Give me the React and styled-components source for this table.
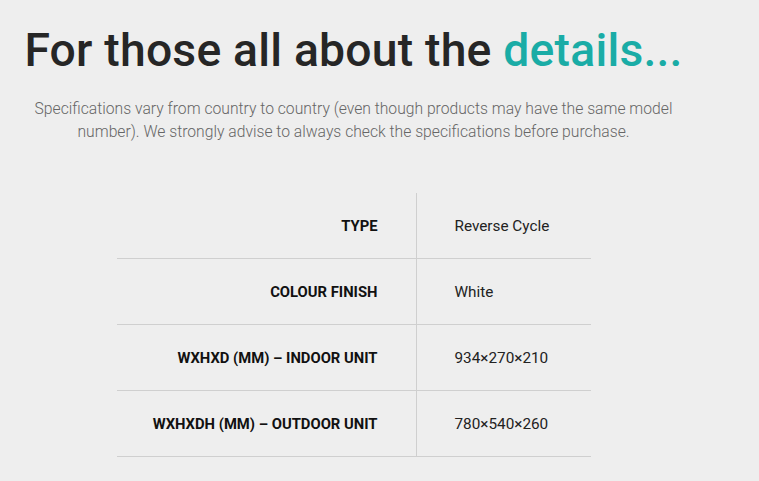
import React from "react";
import styled, { createGlobalStyle } from "styled-components";

const GlobalStyle = createGlobalStyle`
  body {
    margin: 0;
    background: #eeeeee;
    font-family: Roboto, "Noto Sans", sans-serif;
  }
`;

const Page = styled.div`
  width: 707px;
  padding-top: 22px;
  text-align: center;
`;

const Heading = styled.h1`
  margin: 0;
  font-size: 46.3px;
  line-height: 56px;
  font-weight: 500;
  color: #262626;
  letter-spacing: 0.2px;

  span {
    color: #1aaca6;
  }
`;

const Intro = styled.p`
  margin: 19px auto 0;
  width: 680px;
  font-size: 15.7px;
  line-height: 23px;
  font-weight: 300;
  color: #666666;
`;

const SpecTable = styled.div`
  width: 474px;
  margin: 50px auto 0;
`;

const Row = styled.div`
  display: grid;
  grid-template-columns: 300px 174px;
  height: 65px;
  border-bottom: 1px solid #cfcfcf;
`;

const Label = styled.div`
  display: flex;
  align-items: center;
  justify-content: flex-end;
  padding-right: 38px;
  border-right: 1px solid #cfcfcf;
  font-size: 14.8px;
  font-weight: 700;
  color: #111;
  text-transform: uppercase;
`;

const Value = styled.div`
  display: flex;
  align-items: center;
  padding-left: 38px;
  font-size: 15.3px;
  color: #222;
`;

const specs = [
  ["Type", "Reverse Cycle"],
  ["Colour Finish", "White"],
  ["WxHxD (mm) – Indoor Unit", "934×270×210"],
  ["WxHxDH (mm) – Outdoor Unit", "780×540×260"],
];

export default function App() {
  return (
    <>
      <GlobalStyle />
      <Page>
        <Heading>
          For those all about the <span>details...</span>
        </Heading>
        <Intro>
          Specifications vary from country to country (even though products may
          have the same model number). We strongly advise to always check the
          specifications before purchase.
        </Intro>
        <SpecTable>
          {specs.map(([label, value]) => (
            <Row key={label}>
              <Label>{label}</Label>
              <Value>{value}</Value>
            </Row>
          ))}
        </SpecTable>
      </Page>
    </>
  );
}
